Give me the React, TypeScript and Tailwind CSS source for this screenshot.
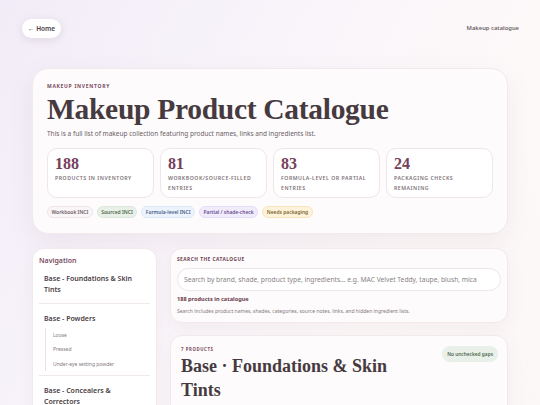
import React from "react";

const stats = [
  { value: "188", label: "Products in inventory" },
  { value: "81", label: "Workbook/source-filled entries" },
  { value: "83", label: "Formula-level or partial entries" },
  { value: "24", label: "Packaging checks remaining" },
];

const chips = [
  { label: "Workbook INCI", cls: "bg-[#faf6f8] border-[#eee4ea] text-[#6e6068]" },
  { label: "Sourced INCI", cls: "bg-[#e9f0e8] border-[#dde8dc] text-[#4f6a50]" },
  { label: "Formula-level INCI", cls: "bg-[#edf3fd] border-[#dfe8f8] text-[#4a5f8a]" },
  { label: "Partial / shade-check", cls: "bg-[#f1ecfb] border-[#e6ddf6] text-[#6a4f94]" },
  { label: "Needs packaging", cls: "bg-[#fdf3da] border-[#f5e6bd] text-[#7d6630]" },
];

const serif = "font-['Liberation_Serif',Georgia,serif]";

export default function App() {
  return (
    <div className="min-h-screen w-full overflow-hidden bg-[linear-gradient(120deg,#f1ecf7_0%,#f8f4fa_35%,#fdf9f9_70%,#fbf7f7_100%)] font-['Noto_Sans',sans-serif] text-[#4a3d44]">
      <header className="flex items-center justify-between pl-[22px] pr-[21px] pt-[19px]">
        <button className="flex h-[19px] items-center rounded-full bg-white px-[6px] text-[6.5px] font-semibold text-[#4a3d44] shadow-[0_2px_8px_rgba(120,90,120,0.15)]">
          ← Home
        </button>
        <span className="text-[5.8px] font-semibold text-[#6e6268]">Makeup catalogue</span>
      </header>

      <main className="px-[32px] pt-[30px]">
        <section className="rounded-[16px] border border-[#f1e9ec] bg-[#fdfbfb] px-[14px] pb-[15px] pt-[14px] shadow-[0_8px_24px_rgba(150,110,130,0.10)]">
          <div className="text-[5px] font-bold uppercase tracking-[0.14em] text-[#7a4c5e]">Makeup inventory</div>
          <h1 className={`${serif} mt-[1px] text-[29.5px] font-bold leading-[34px] tracking-[-0.01em] text-[#463a40]`}>
            Makeup Product Catalogue
          </h1>
          <p className="mt-[3px] text-[6.5px] text-[#6b6068]">
            This is a full list of makeup collection featuring product names, links and ingredients list.
          </p>

          <div className="mt-[10px] grid grid-cols-4 gap-[6px]">
            {stats.map((s) => (
              <div key={s.value} className="h-[50px] rounded-[10px] border border-[#efe6ea] bg-white px-[7px] pt-[6px]">
                <div className={`${serif} text-[16px] font-bold leading-[17px] text-[#74405a]`}>{s.value}</div>
                <div className="mt-[1px] text-[5.2px] font-semibold uppercase leading-[10px] tracking-[0.1em] text-[#7d7278]">
                  {s.label}
                </div>
              </div>
            ))}
          </div>

          <div className="mt-[8px] flex gap-[4px]">
            {chips.map((c) => (
              <span key={c.label} className={`flex h-[12px] items-center rounded-full border px-[3.5px] text-[4.95px] font-semibold ${c.cls}`}>
                {c.label}
              </span>
            ))}
          </div>
        </section>

        <div className="mt-[14px] grid grid-cols-[125px_1fr] gap-[13px]">
          <aside className="h-[200px] rounded-[12px] border border-[#f1e9ec] bg-white px-[6px] pt-[7px] shadow-[0_6px_18px_rgba(150,110,130,0.08)]">
            <div className="text-[7px] font-semibold text-[#7a4c5e]">Navigation</div>
            <div className="mt-[6px] border-b border-[#f0e8eb] px-[5px] pb-[8px] text-[7px] font-semibold leading-[11px] text-[#4a3d44]">
              Base - Foundations &amp; Skin Tints
            </div>
            <div className="border-b border-[#f0e8eb] px-[5px] pb-[4px] pt-[9px]">
              <div className="text-[7px] font-semibold leading-[11px] text-[#4a3d44]">Base - Powders</div>
              <div className="ml-[1px] mt-[4px] border-l border-[#ebe2e6] pl-[7px] text-[5px] leading-[14.5px] text-[#857a80]">
                <div>Loose</div>
                <div>Pressed</div>
                <div>Under-eye setting powder</div>
              </div>
            </div>
            <div className="px-[5px] pt-[9px] text-[7px] font-semibold leading-[11px] text-[#4a3d44]">
              Base - Concealers &amp; Correctors
            </div>
          </aside>

          <div className="flex flex-col gap-[12px]">
            <section className="rounded-[12px] border border-[#f1e9ec] bg-[#fdfbfb] px-[6px] pb-[7px] pt-[7px] shadow-[0_6px_18px_rgba(150,110,130,0.08)]">
              <div className="text-[4.8px] font-bold uppercase tracking-[0.1em] text-[#6e4152]">Search the catalogue</div>
              <div className="mt-[5px] flex h-[23px] items-center rounded-full border border-[#efe6ea] bg-white px-[6px] text-[6.7px] text-[#8a7f85]">
                Search by brand, shade, product type, ingredients... e.g. MAC Velvet Teddy, taupe, blush, mica
              </div>
              <div className="mt-[4px] text-[5.6px] font-bold leading-[9px] text-[#6a3a4c]">188 products in catalogue</div>
              <div className="mt-[3px] text-[5px] leading-[8px] text-[#857a80]">
                Search includes product names, shades, categories, source notes, links, and hidden ingredient lists.
              </div>
            </section>

            <section className="h-[100px] rounded-[12px] border border-[#f1e9ec] bg-[#fdfbfb] px-[10px] pt-[10px] shadow-[0_6px_18px_rgba(150,110,130,0.08)]">
              <div className="flex items-start justify-between">
                <div>
                  <div className="text-[4.3px] font-bold uppercase tracking-[0.14em] text-[#7a4c5e]">7 products</div>
                  <h2 className={`${serif} mt-[1px] w-[215px] text-[18px] font-bold leading-[24px] text-[#463a40]`}>
                    Base · Foundations &amp; Skin Tints
                  </h2>
                </div>
                <span className="mr-[-1px] flex h-[16px] items-center rounded-full bg-[#e9f0e9] px-[5px] text-[4.8px] font-semibold text-[#4f6a50]">
                  No unchecked gaps
                </span>
              </div>
            </section>
          </div>
        </div>
      </main>
    </div>
  );
}
